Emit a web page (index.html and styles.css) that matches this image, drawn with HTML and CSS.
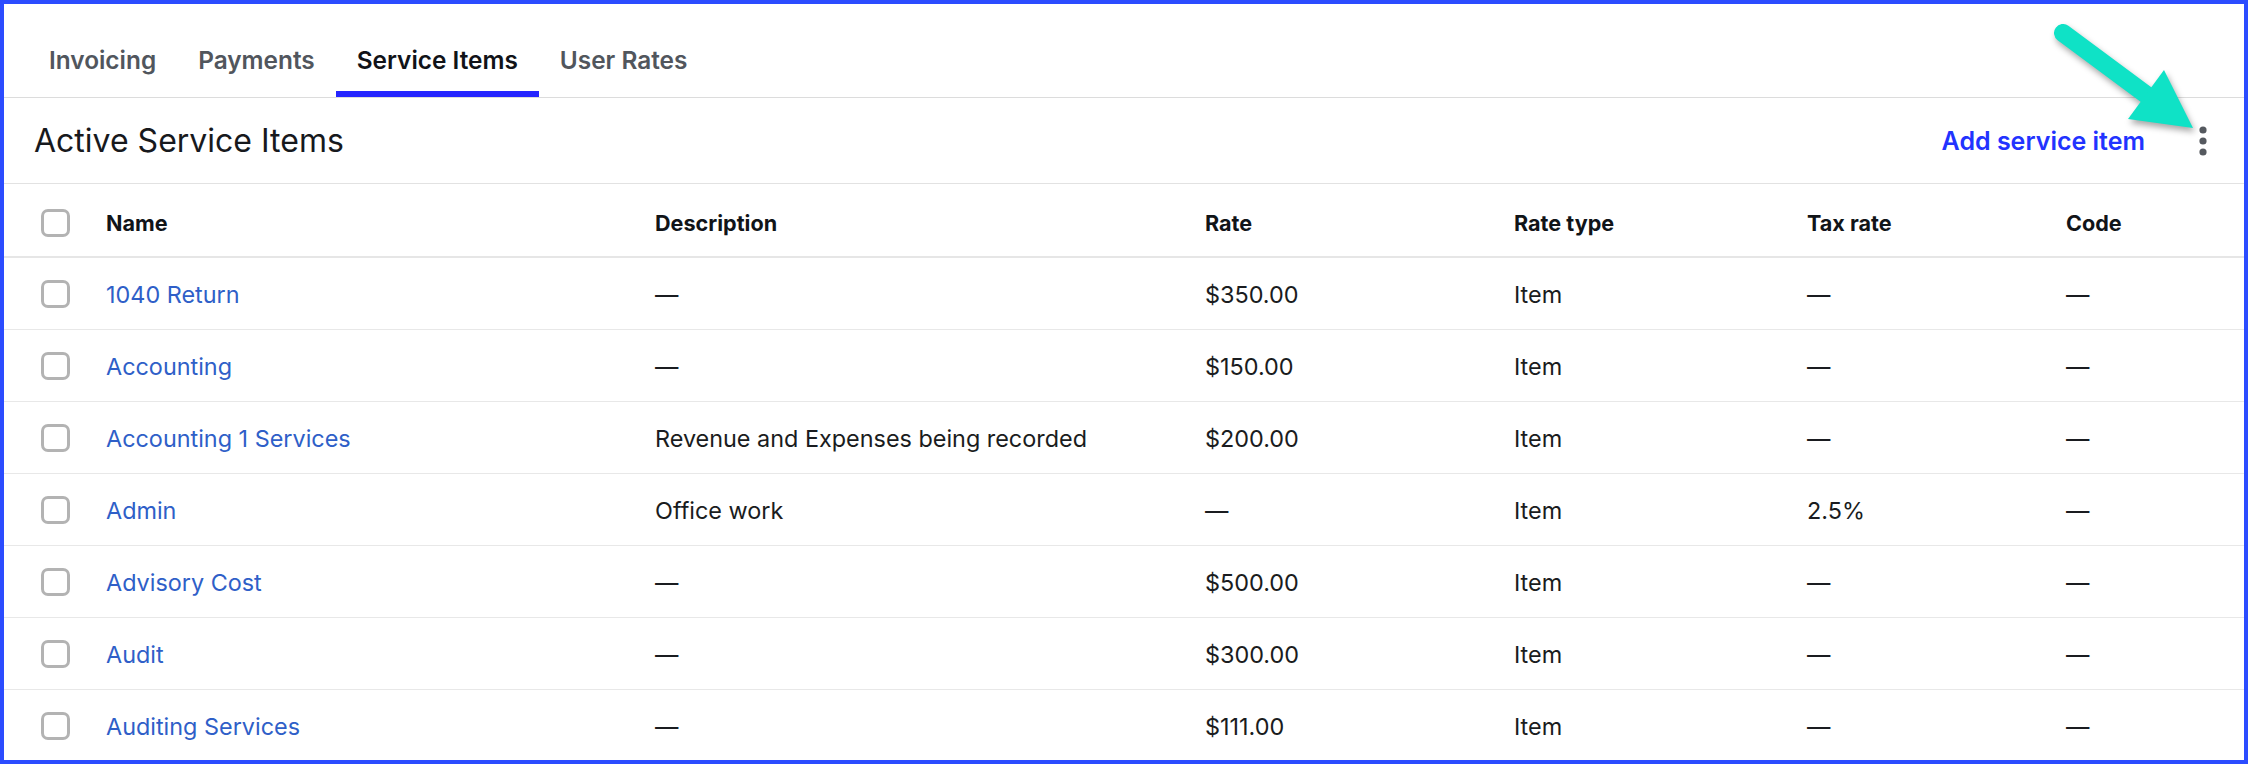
FILE: index.html
```html
<!DOCTYPE html>
<html lang="en">
<head>
    <meta charset="UTF-8">
    <meta name="viewport" content="width=device-width, initial-scale=1.0">
    <title>Service Items</title>
    <link rel="stylesheet" href="styles.css">
</head>
<body>
    <div class="frame">
        <!-- tabs -->
        <nav class="tabs">
            <a class="tab">Invoicing</a>
            <a class="tab">Payments</a>
            <a class="tab active">Service Items</a>
            <a class="tab">User Rates</a>
        </nav>

        <div class="section-head">
            <h1>Active Service Items</h1>
            <div class="actions">
                <a class="add-link">Add service item</a>
                <button class="kebab" aria-label="More">
                    <svg width="8" height="30" viewBox="0 0 8 30">
                        <circle cx="4" cy="4" r="3.6" fill="#55595f"/>
                        <circle cx="4" cy="15" r="3.6" fill="#55595f"/>
                        <circle cx="4" cy="26" r="3.6" fill="#55595f"/>
                    </svg>
                </button>
            </div>
        </div>

        <table class="items">
            <colgroup>
                <col style="width:102px">
                <col style="width:549px">
                <col style="width:550px">
                <col style="width:309px">
                <col style="width:293px">
                <col style="width:259px">
                <col>
            </colgroup>
            <thead>
                <tr>
                    <th><span class="check"></span></th>
                    <th>Name</th>
                    <th>Description</th>
                    <th>Rate</th>
                    <th>Rate type</th>
                    <th>Tax rate</th>
                    <th>Code</th>
                </tr>
            </thead>
            <tbody>
                <tr>
                    <td><span class="check"></span></td>
                    <td><a class="name">1040 Return</a></td>
                    <td>—</td>
                    <td>$350.00</td>
                    <td>Item</td>
                    <td>—</td>
                    <td>—</td>
                </tr>
                <tr>
                    <td><span class="check"></span></td>
                    <td><a class="name">Accounting</a></td>
                    <td>—</td>
                    <td>$150.00</td>
                    <td>Item</td>
                    <td>—</td>
                    <td>—</td>
                </tr>
                <tr>
                    <td><span class="check"></span></td>
                    <td><a class="name">Accounting 1 Services</a></td>
                    <td>Revenue and Expenses being recorded</td>
                    <td>$200.00</td>
                    <td>Item</td>
                    <td>—</td>
                    <td>—</td>
                </tr>
                <tr>
                    <td><span class="check"></span></td>
                    <td><a class="name">Admin</a></td>
                    <td>Office work</td>
                    <td>—</td>
                    <td>Item</td>
                    <td>2.5%</td>
                    <td>—</td>
                </tr>
                <tr>
                    <td><span class="check"></span></td>
                    <td><a class="name">Advisory Cost</a></td>
                    <td>—</td>
                    <td>$500.00</td>
                    <td>Item</td>
                    <td>—</td>
                    <td>—</td>
                </tr>
                <tr>
                    <td><span class="check"></span></td>
                    <td><a class="name">Audit</a></td>
                    <td>—</td>
                    <td>$300.00</td>
                    <td>Item</td>
                    <td>—</td>
                    <td>—</td>
                </tr>
                <tr>
                    <td><span class="check"></span></td>
                    <td><a class="name">Auditing Services</a></td>
                    <td>—</td>
                    <td>$111.00</td>
                    <td>Item</td>
                    <td>—</td>
                    <td>—</td>
                </tr>
            </tbody>
        </table>

        <!-- annotation arrow pointing at the menu -->
        <svg class="pointer" width="208" height="160" viewBox="2040 10 208 160">
            <g fill="#0fe2c6">
                <line x1="2063" y1="33" x2="2152" y2="99" stroke="#0fe2c6" stroke-width="18" stroke-linecap="round"/>
                <polygon points="2193,128 2164,70 2128,119"/>
            </g>
        </svg>
    </div>
</body>
</html>
```

FILE: styles.css
```css
body {
    margin: 0;
    font-family: Inter, "Noto Sans", Arial, sans-serif;
    background-color: #fff;
    color: #16181c;
}
.frame {
    position: relative;
    height: 764px;
    box-sizing: border-box;
    border: 4px solid #2b4cff;
    overflow: hidden;
}
.tabs {
    display: flex;
    padding-left: 24px;
    border-bottom: 1px solid #dcdcdc;
}
.tab {
    padding: 25px 21px 0;
    height: 62px;
    line-height: 62px;
    font-size: 24.4px;
    font-weight: 600;
    color: #51565d;
    border-bottom: 6px solid transparent;
    cursor: pointer;
}
.tab.active {
    color: #111318;
    border-bottom-color: #2424ff;
}
.section-head {
    display: flex;
    align-items: center;
    justify-content: space-between;
    height: 85px;
    padding: 0 29px 0 30px;
    border-bottom: 1px solid #e2e2e2;
}
.section-head h1 {
    margin: 0;
    font-size: 32px;
    font-weight: 400;
    color: #17191d;
}
.actions {
    display: flex;
    align-items: center;
    gap: 46px;
}
.add-link {
    font-size: 25px;
    font-weight: 600;
    color: #2233ff;
    cursor: pointer;
}
.kebab {
    width: 24px;
    height: 40px;
    padding: 0;
    border: none;
    background: none;
    display: flex;
    align-items: center;
    justify-content: center;
    cursor: pointer;
}
.items {
    width: 100%;
    table-layout: fixed;
    border-collapse: collapse;
}
.items th {
    height: 67px;
    padding: 5px 0 0;
    text-align: left;
    font-size: 21.6px;
    font-weight: 700;
    color: #111418;
    border-bottom: 2px solid #e6e6e6;
}
.items td {
    height: 70px;
    padding: 1px 0 0;
    font-size: 23.4px;
    color: #1a1c20;
    border-bottom: 1px solid #e8e8e8;
}
.items th:first-child,
.items td:first-child {
    padding-left: 37px;
}
.check {
    display: block;
    width: 29px;
    height: 28px;
    box-sizing: border-box;
    border: 3px solid #b3b3b3;
    border-radius: 7px;
}
.name {
    color: #2f5fc8;
    cursor: pointer;
}
.pointer {
    position: absolute;
    left: 2036px;
    top: 6px;
    filter: drop-shadow(2px 4px 3px rgba(0,0,0,0.35));
}
```
